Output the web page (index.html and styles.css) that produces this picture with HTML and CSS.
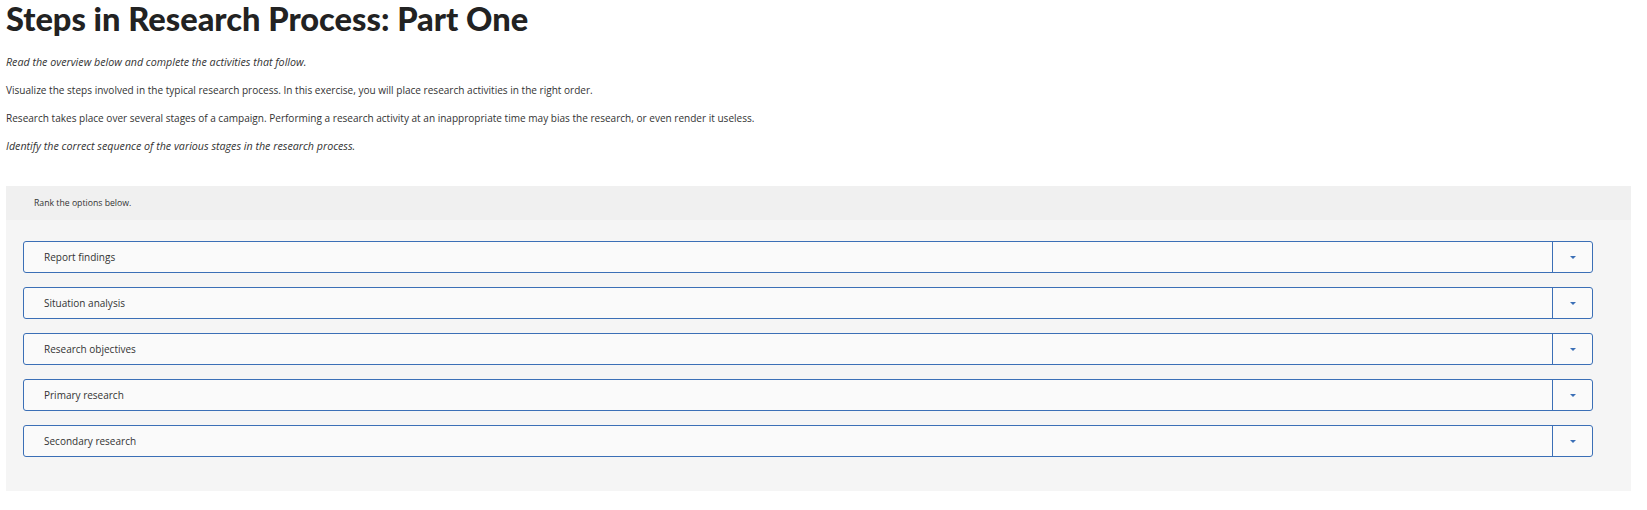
FILE: index.html
```html
<!DOCTYPE html>
<html>
<head>
<meta charset="utf-8">
<link rel="stylesheet" href="styles.css">
</head>
<body>
<h1 class="title">Steps in Research Process: Part One</h1>
<p class="intro italic">Read the overview below and complete the activities that follow.</p>
<p class="intro">Visualize the steps involved in the typical research process. In this exercise, you will place research activities in the right order.</p>
<p class="intro">Research takes place over several stages of a campaign. Performing a research activity at an inappropriate time may bias the research, or even render it useless.</p>
<p class="intro italic">Identify the correct sequence of the various stages in the research process.</p>

<section class="panel">
  <div class="panel-head">Rank the options below.</div>
  <div class="panel-body">
    <div class="rank-row"><span class="rank-label">Report findings</span><span class="rank-btn"><span class="caret"></span></span></div>
    <div class="rank-row"><span class="rank-label">Situation analysis</span><span class="rank-btn"><span class="caret"></span></span></div>
    <div class="rank-row"><span class="rank-label">Research objectives</span><span class="rank-btn"><span class="caret"></span></span></div>
    <div class="rank-row"><span class="rank-label">Primary research</span><span class="rank-btn"><span class="caret"></span></span></div>
    <div class="rank-row"><span class="rank-label">Secondary research</span><span class="rank-btn"><span class="caret"></span></span></div>
  </div>
</section>
</body>
</html>
```

FILE: styles.css
```css
html, body {
  margin: 0;
  padding: 0;
  background: #fff;
}
body {
  font-family: "Open Sans", "Lato", sans-serif;
  color: #333;
  padding: 0 16px 0 6px;
}
.title {
  margin: 0;
  font-family: "Lato", sans-serif;
  font-weight: 900;
  font-size: 32.6px;
  line-height: 38px;
  color: #222;
}
.intro {
  margin: 0;
  font-size: 10.05px;
  line-height: 28px;
  color: #333;
}
.intro:first-of-type {
  margin-top: 10px;
}
.italic {
  font-style: italic;
  font-size: 10.7px;
}
.panel {
  margin-top: 26px;
  background: #f5f5f5;
}
.panel-head {
  height: 34px;
  line-height: 34px;
  background: #f0f0f0;
  padding-left: 28px;
  font-size: 8.7px;
  color: #333;
}
.panel-body {
  padding: 21px 38px 34px 17px;
  display: flex;
  flex-direction: column;
  gap: 14px;
}
.rank-row {
  display: flex;
  height: 32px;
  box-sizing: border-box;
  border: 1px solid #3b6fb6;
  border-radius: 3px;
  background: #fafafa;
}
.rank-label {
  flex: 1;
  padding-left: 20px;
  font-size: 10px;
  line-height: 30px;
  color: #333;
}
.rank-btn {
  width: 39px;
  border-left: 1px solid #3b6fb6;
  display: flex;
  align-items: center;
  justify-content: center;
}
.caret {
  width: 0;
  height: 0;
  border-left: 3px solid transparent;
  border-right: 3px solid transparent;
  border-top: 3px solid #3b6fb6;
}
```
